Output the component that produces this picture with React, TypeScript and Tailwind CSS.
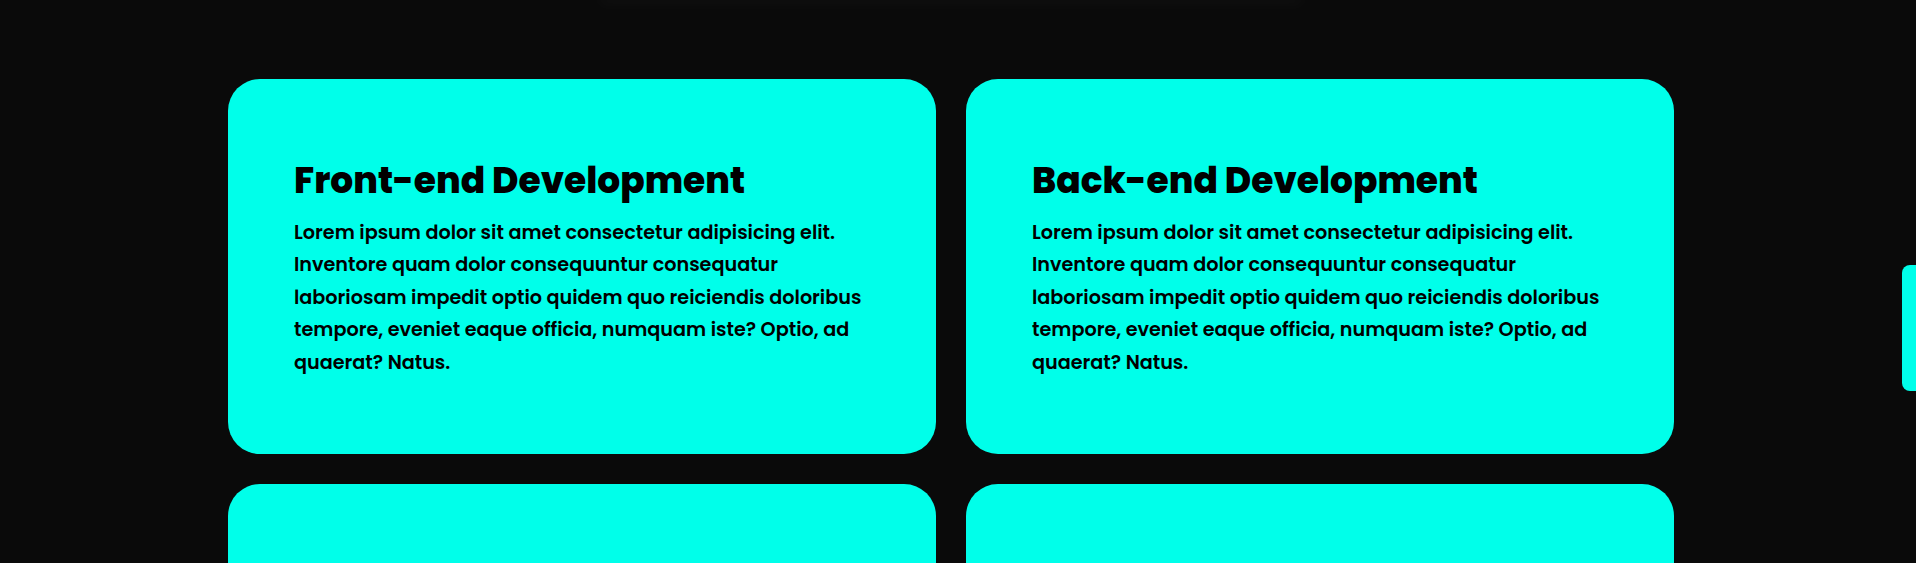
const services = [
    {
        title: 'Front-end Development',
        lines: [
            'Lorem ipsum dolor sit amet consectetur adipisicing elit.',
            'Inventore quam dolor consequuntur consequatur',
            'laboriosam impedit optio quidem quo reiciendis doloribus',
            'tempore, eveniet eaque officia, numquam iste? Optio, ad',
            'quaerat? Natus.',
        ],
    },
    {
        title: 'Back-end Development',
        lines: [
            'Lorem ipsum dolor sit amet consectetur adipisicing elit.',
            'Inventore quam dolor consequuntur consequatur',
            'laboriosam impedit optio quidem quo reiciendis doloribus',
            'tempore, eveniet eaque officia, numquam iste? Optio, ad',
            'quaerat? Natus.',
        ],
    },
    {
        title: 'Web Design',
        lines: [
            'Lorem ipsum dolor sit amet consectetur adipisicing elit.',
            'Inventore quam dolor consequuntur consequatur',
            'laboriosam impedit optio quidem quo reiciendis doloribus',
            'tempore, eveniet eaque officia, numquam iste? Optio, ad',
            'quaerat? Natus.',
        ],
    },
    {
        title: 'Mobile Development',
        lines: [
            'Lorem ipsum dolor sit amet consectetur adipisicing elit.',
            'Inventore quam dolor consequuntur consequatur',
            'laboriosam impedit optio quidem quo reiciendis doloribus',
            'tempore, eveniet eaque officia, numquam iste? Optio, ad',
            'quaerat? Natus.',
        ],
    },
];

function ServiceCard({ title, lines }: { title: string; lines: string[] }) {
    return (
        <div className="rounded-[32px] bg-[#00ffea] pb-[75px] pl-[66px] pr-[62px] pt-[80px] text-black">
            <h2 className="mb-[15px] text-[36px] font-extrabold leading-[43px]">
                {title}
            </h2>
            <p className="whitespace-nowrap text-[19.2px] font-semibold leading-[32.4px]">
                {lines.map((line, i) => (
                    <span key={i} className="block">
                        {line}
                    </span>
                ))}
            </p>
        </div>
    );
}

export default function App() {
    return (
        <div
            className="flex h-[563px] overflow-hidden bg-[#0a0a0a]"
            style={{ fontFamily: 'Poppins, Inter, "Noto Sans", sans-serif' }}
        >
            <main className="flex flex-1 flex-col items-center overflow-hidden">
                <div className="h-0 w-[700px] shadow-[0_0_14px_3px_rgba(255,255,255,0.05)]" />
                <section className="mt-[79px] grid w-[1446px] grid-cols-2 gap-[30px]">
                    {services.map((s) => (
                        <ServiceCard key={s.title} title={s.title} lines={s.lines} />
                    ))}
                </section>
            </main>
            <aside className="w-[14px] shrink-0 pt-[265px]">
                <div className="h-[126px] rounded-l-[8px] bg-[#00ffea]" />
            </aside>
        </div>
    );
}
